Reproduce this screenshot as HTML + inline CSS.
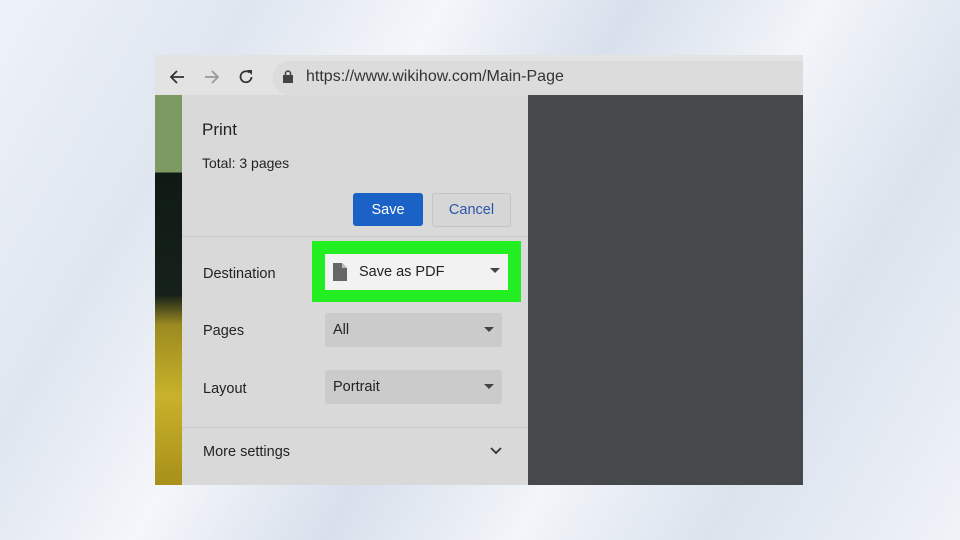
<!DOCTYPE html>
<html><head><style>
body{margin:0;width:960px;height:540px;overflow:hidden;position:relative;font-family:"Liberation Sans",sans-serif;
background:linear-gradient(120deg,#eef2f8 0%,#dfe6f0 20%,#f4f6fa 35%,#d8e0ec 50%,#f2f5f9 65%,#dbe3ee 80%,#f0f3f8 100%);}
.win{position:absolute;left:155px;top:55px;width:648px;height:430px;background:#d9d9d9;overflow:hidden}
.tb{position:absolute;left:0;top:0;width:648px;height:40px;background:#e3e3e3}
.url{position:absolute;left:118px;top:6px;width:540px;height:34px;background:#dcdcdc;border-radius:16px}
.left{position:absolute;left:0;top:40px;width:27px;height:390px;background:linear-gradient(#7e9a64 0,#7e9a64 77px,#0f1a14 78px,#15211a 200px,#9b8a20 230px,#c8b22a 300px,#a8901a 390px)}
.right{position:absolute;left:373px;top:40px;width:275px;height:390px;background:#45494c}
.t{position:absolute;color:#222;font-size:14.5px}
.sel{position:absolute;left:170px;width:177px;height:34px;background:#cbcbcb;border-radius:3px}
.arr{position:absolute;right:8px;top:14px;width:0;height:0;border-left:5px solid transparent;border-right:5px solid transparent;border-top:5px solid #444}
.hr{position:absolute;left:27px;width:346px;height:1px;background:#c8c8c8}
</style></head><body>
<div class="win">
<div class="tb">
<svg style="position:absolute;left:14px;top:14px" width="16" height="16"><path d="M15 8H2M8 2L2 8l6 6" stroke="#333" stroke-width="1.8" fill="none"/></svg>
<svg style="position:absolute;left:49px;top:14px" width="16" height="16"><path d="M1 8h13M8 2l6 6-6 6" stroke="#999" stroke-width="1.8" fill="none"/></svg>
<svg style="position:absolute;left:83px;top:14px" width="16" height="16"><path d="M13.5 8A5.5 5.5 0 1 1 11.5 3.5" stroke="#333" stroke-width="1.8" fill="none"/><path d="M9 1h5v5z" fill="#333"/></svg>
<div class="url"></div>
<svg style="position:absolute;left:128px;top:15px" width="10" height="13"><rect x="0" y="5" width="10" height="8" fill="#444"/><path d="M2.5 5V3.5a2.5 2.5 0 0 1 5 0V5" stroke="#444" stroke-width="1.5" fill="none"/></svg>
<div class="t" style="left:151px;top:13px;font-size:16px;color:#333">https://www.wikihow.com/Main-Page</div>
</div>
<div class="left"></div>
<div class="right"></div>
<div class="t" style="left:47px;top:65px;font-size:17px">Print</div>
<div class="t" style="left:47px;top:100px;font-size:14px">Total: 3 pages</div>
<div style="position:absolute;left:198px;top:138px;width:70px;height:33px;background:#1a62c6;border-radius:3px;color:#fff;font-size:14.5px;text-align:center;line-height:34px">Save</div>
<div style="position:absolute;left:277px;top:138px;width:77px;height:32px;background:#d6d6d6;border:1px solid #c5c5c5;border-radius:3px;color:#2a56a8;font-size:14.5px;text-align:center;line-height:33px">Cancel</div>
<div class="hr" style="top:181px"></div>
<div class="t" style="left:48px;top:211px">Destination</div>
<div style="position:absolute;left:157px;top:186px;width:209px;height:61px;background:#22ee22"></div>
<div style="position:absolute;left:170px;top:199px;width:183px;height:36px;background:#f2f2f2">
<svg style="position:absolute;left:8px;top:9px" width="14" height="18"><path d="M0 0h9l5 5v13H0z" fill="#666"/><path d="M9 0v5h5" fill="#bbb"/></svg>
<div class="t" style="left:34px;top:10px">Save as PDF</div><div class="arr"></div></div>
<div class="t" style="left:48px;top:268px">Pages</div>
<div class="sel" style="top:258px"><div class="t" style="left:8px;top:9px">All</div><div class="arr"></div></div>
<div class="t" style="left:48px;top:326px">Layout</div>
<div class="sel" style="top:315px"><div class="t" style="left:8px;top:9px">Portrait</div><div class="arr"></div></div>
<div class="hr" style="top:372px"></div>
<div class="t" style="left:48px;top:389px">More settings</div>
<svg style="position:absolute;left:335px;top:392px" width="12" height="8"><path d="M1 1l5 5 5-5" stroke="#333" stroke-width="1.8" fill="none"/></svg>
</div>
</body></html>
